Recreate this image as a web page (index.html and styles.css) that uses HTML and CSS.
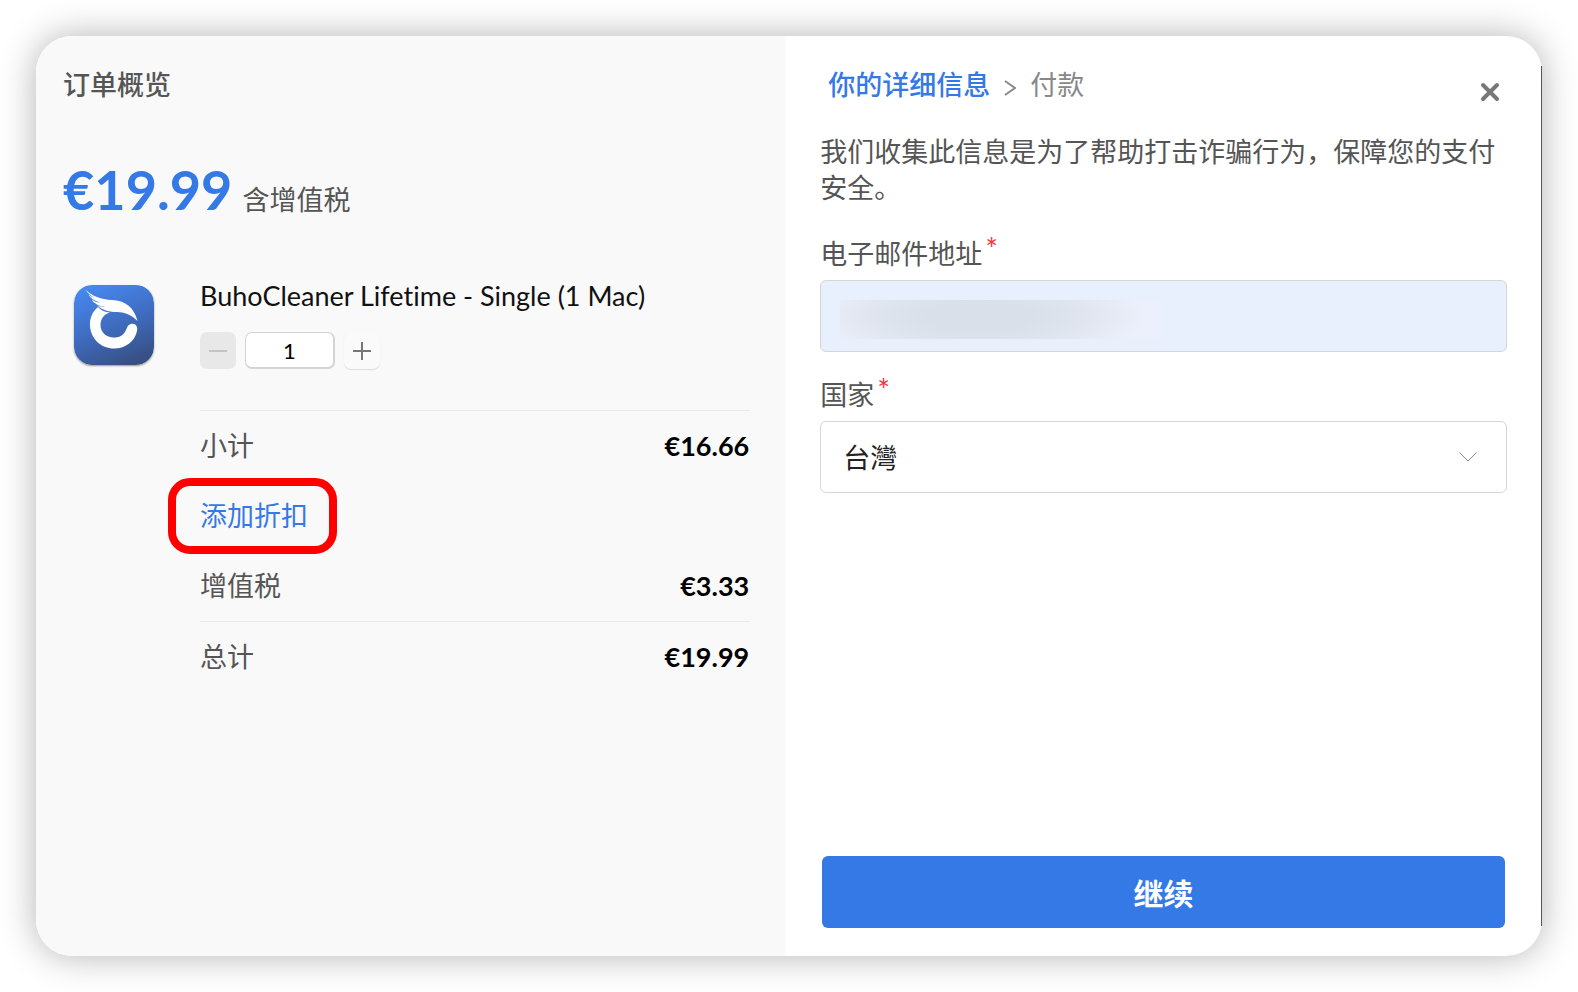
FILE: index.html
```html
<!DOCTYPE html>
<html lang="zh-CN">
<head>
    <meta charset="UTF-8">
    <meta name="viewport" content="width=device-width, initial-scale=1.0">
    <title>BuhoCleaner</title>
    <link rel="stylesheet" href="styles.css">
</head>
<body>

    <main class="checkout">
        <section class="summary">
            <h2>订单概览</h2>

            <div class="price">
                <strong>€19.99</strong>
                <span>含增值税</span>
            </div>

            <div class="product">
                <svg class="product-icon" viewBox="0 0 80 80" aria-hidden="true">
                    <defs>
                        <linearGradient id="iconBg" x1="0.3" y1="0" x2="0.7" y2="1">
                            <stop offset="0" stop-color="#4687ee"/>
                            <stop offset="0.5" stop-color="#3f6cc0"/>
                            <stop offset="1" stop-color="#374f82"/>
                        </linearGradient>
                    </defs>
                    <rect width="80" height="80" rx="18" fill="url(#iconBg)"/>
                    <path d="M24 22C18 27 15.500 34 16 41C17 54 27 63.500 40 63.500C52 63.500 61 56 63 46C64 42 62 38.700 58.500 38.700C55 38.700 53.500 41 52.500 44C50 50 46 52.500 40 52.500C32 52.500 26.500 47 26.500 40C26.500 34 30 29 36 27.500C31 27.500 27 25 24 22Z" fill="#fff"/>
                    <path d="M12 5C18 11 27 14.500 38 15C51 15.500 60 22 63.500 36C58 30 50 27 43 27C36 27 29 26 23 20C26 21.500 28 22 31 22C25 21 20 18.500 17.500 14.500C20.500 16.500 23 17.500 26 17.500C20 15.500 16 12.500 14.500 9.500C16.500 11 18 12 20 12.500C16 10 13 7.500 12 5Z" fill="#fff"/>
                </svg>
                <div class="product-info">
                    <h3>BuhoCleaner Lifetime - Single (1 Mac)</h3>
                    <div class="quantity">
                        <button type="button" class="step" aria-label="减少" disabled>
                            <svg viewBox="0 0 18 18"><path d="M0 9H18"/></svg>
                        </button>
                        <input type="text" value="1" aria-label="数量">
                        <button type="button" class="step" aria-label="增加">
                            <svg viewBox="0 0 18 18"><path d="M0 9H18M9 0V18"/></svg>
                        </button>
                    </div>

                    <dl class="totals">
                        <div class="row">
                            <dt>小计</dt>
                            <dd>€16.66</dd>
                        </div>
                        <div class="row">
                            <dt><a href="#" class="discount">添加折扣</a></dt>
                        </div>
                        <div class="row">
                            <dt>增值税</dt>
                            <dd>€3.33</dd>
                        </div>
                        <div class="row total">
                            <dt>总计</dt>
                            <dd>€19.99</dd>
                        </div>
                    </dl>
                </div>
            </div>
        </section>

        <form class="details">
            <div class="details-head">
                <ol class="steps">
                    <li class="active">你的详细信息</li>
                    <li class="arrow" aria-hidden="true">
                        <svg viewBox="0 0 12 16"><path d="M1 1L11 8L1 15"/></svg>
                    </li>
                    <li>付款</li>
                </ol>
                <button type="button" class="close" aria-label="关闭">
                    <svg viewBox="0 0 20 20"><path d="M3 3L17 17M17 3L3 17"/></svg>
                </button>
            </div>

            <p>我们收集此信息是为了帮助打击诈骗行为，保障您的支付安全。</p>

            <div class="field">
                <label for="email">电子邮件地址<span class="required">*</span></label>
                <div class="control masked">
                    <input type="email" id="email" name="email">
                </div>
            </div>

            <div class="field">
                <label for="country">国家<span class="required">*</span></label>
                <div class="control">
                    <select id="country" name="country">
                        <option value="TW">台灣</option>
                    </select>
                    <svg class="chevron" viewBox="0 0 18 10"><path d="M0.500 0.500L9 9L17.500 0.500"/></svg>
                </div>
            </div>

            <button type="submit" class="submit">继续</button>
        </form>
    </main>

</body>
</html>
```

FILE: styles.css
```css
* {
    box-sizing: border-box;
}
body {
    margin: 0;
    padding: 36px;
    min-height: 100vh;
    display: flex;
    background: white;
    color: #555;
    font-family: Lato, "Noto Sans CJK SC", sans-serif;
    font-size: 27px;
    line-height: 36px;
}
h2, h3, p, dl, dd, ol {
    margin: 0;
    padding: 0;
}
button, input, select {
    font-family: inherit;
    font-size: inherit;
}
.checkout {
    position: relative;
    flex: 1;
    display: flex;
    border-radius: 36px;
    background: white;
    box-shadow: 0 0 36px rgba(0, 0, 0, 0.3);
}
/* dark edge of the window */
.checkout::after {
    content: "";
    position: absolute;
    top: 30px;
    bottom: 30px;
    right: 0;
    width: 1px;
    background: #55555c;
}

/* order summary */
.summary {
    flex: 0 0 49.75%;
    padding: 31px 36px 28px 27px;
    border-radius: 36px 0 0 36px;
    background: #f9f9f9;
}
h2 {
    font-size: 27px;
    font-weight: 500;
}
.price {
    display: flex;
    align-items: baseline;
    gap: 10px;
    margin-top: 51px;
    line-height: 72px;
}
.price strong {
    color: #3579e6;
    font-size: 54px;
    font-weight: bold;
}
.product {
    display: flex;
    align-items: flex-start;
    margin-top: 42px;
}
.product-icon {
    flex: none;
    width: 80px;
    height: 80px;
    margin: 7px 46px 0 11px;
    border-radius: 18px;
    box-shadow: 0 1px 2px rgba(0, 0, 0, 0.4);
}
.product-info {
    flex: 1;
}
h3 {
    color: #111;
    font-size: 27px;
    font-weight: normal;
    font-variant-ligatures: none;
}
.quantity {
    display: flex;
    gap: 9px;
    margin-top: 18px;
}
.quantity input {
    width: 90px;
    height: 37px;
    padding: 0;
    border: 1px solid #d4d4d4;
    border-width: 1px 2px 2px 1px;
    border-radius: 7px;
    background: white;
    color: black;
    font-size: 22px;
    text-align: center;
}
.step {
    width: 36px;
    height: 37px;
    padding: 9px;
    border: none;
    border-radius: 7px;
    background: #fafafa;
    box-shadow: 0 1px 1px rgba(0, 0, 0, 0.12);
    line-height: 0;
}
.step:disabled {
    background: #e8e8e8;
    box-shadow: none;
}
.step svg {
    width: 18px;
    height: 18px;
    stroke: #777;
    stroke-width: 2;
}
.step:disabled svg {
    stroke: #c4c4c4;
}
.totals {
    margin-top: 41px;
    border-top: 1px solid #e8e8e8;
}
.row {
    display: flex;
    justify-content: space-between;
    align-items: center;
    height: 70px;
}
.total {
    height: 71px;
    border-top: 1px solid #e8e8e8;
}
.row dd {
    color: black;
    font-weight: bold;
}
.discount {
    position: relative;
    color: #3579e6;
    text-decoration: none;
}
/* red marker round the discount link */
.discount::after {
    content: "";
    position: absolute;
    inset: -21px -29px -22px -32px;
    border: 8px solid red;
    border-radius: 22px;
}

/* buyer details */
.details {
    flex: 1;
    display: flex;
    flex-direction: column;
    padding: 31px 35px 28px;
}
.details-head {
    display: flex;
    justify-content: space-between;
}
.steps {
    display: flex;
    align-items: center;
    gap: 14px;
    padding-left: 8px;
    list-style: none;
    color: #888;
}
.steps .active {
    color: #3579e6;
    font-weight: 500;
}
.arrow {
    display: flex;
    padding-top: 6px;
}
.arrow svg {
    width: 12px;
    height: 16px;
    fill: none;
    stroke: #888;
    stroke-width: 2;
}
.close {
    margin: 15px 7px 0 0;
    width: 20px;
    height: 20px;
    padding: 0;
    border: none;
    background: none;
    line-height: 0;
}
.close svg {
    width: 20px;
    height: 20px;
    stroke: #777;
    stroke-width: 4;
    stroke-linecap: round;
}
.details p {
    margin: 31px 0 30px;
}
.field {
    margin-bottom: 25px;
}
.field label {
    display: block;
}
.required {
    margin-left: 3px;
    color: #f5363f;
    font-size: 30px;
    line-height: 0;
    vertical-align: 4px;
}
.control {
    position: relative;
    margin-top: 8px;
}
.control input, .control select {
    display: block;
    width: 100%;
    height: 72px;
    padding: 0 22px;
    border: 1px solid #d6d6d6;
    border-radius: 6px;
    background: white;
    color: #222;
    appearance: none;
}
.control input {
    background: #e8effd;
}
.masked::after {
    content: "";
    position: absolute;
    top: 20px;
    left: 20px;
    width: 322px;
    height: 39px;
    background: radial-gradient(ellipse 52% 120% at 43% 42%, #d9e0ea 30%, #e0e5ef 65%, #ebf0fc 100%);
}
.chevron {
    position: absolute;
    right: 30px;
    top: 31px;
    width: 18px;
    height: 10px;
    fill: none;
    stroke: #888;
    pointer-events: none;
}
.submit {
    height: 72px;
    margin: auto 2px 0;
    border: none;
    border-radius: 6px;
    background: #3579e6;
    color: white;
    font-size: 30px;
    font-weight: bold;
}
```
